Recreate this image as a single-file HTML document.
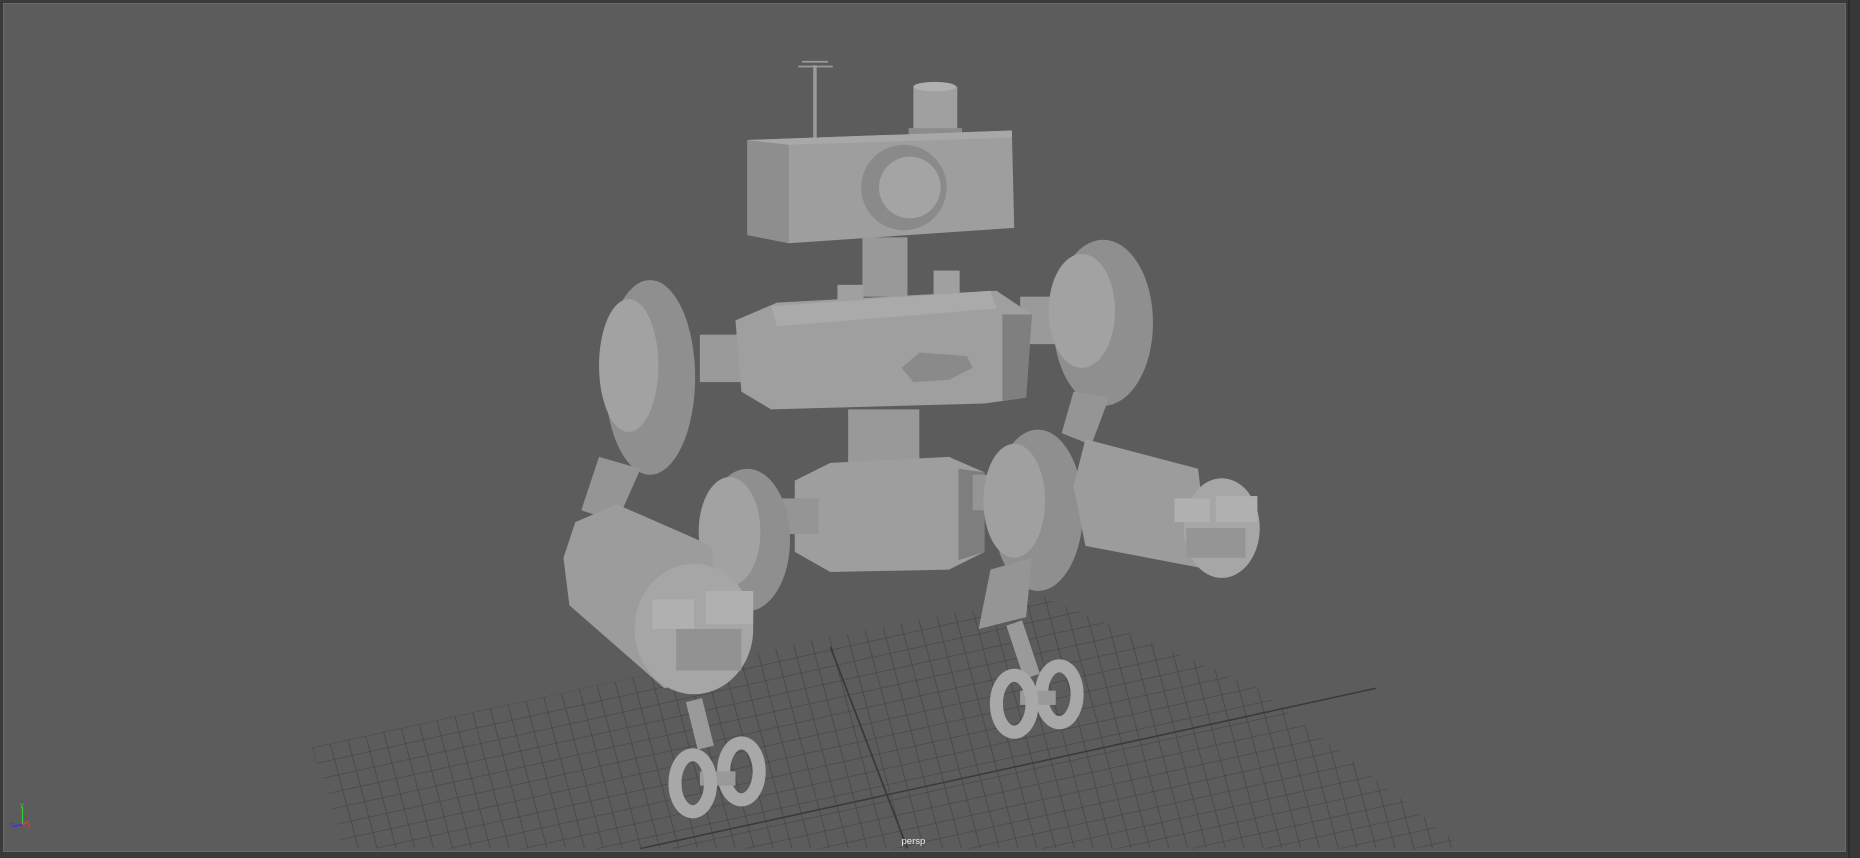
<!DOCTYPE html>
<html><head><style>
html,body{margin:0;padding:0;width:1860px;height:858px;overflow:hidden;background:#3a3a3a;font-family:"Liberation Sans",sans-serif}
#vp{position:absolute;left:3px;top:3px;width:1843px;height:849px;background:#5c5c5c;border:1px solid #6a6a6a;box-sizing:border-box}
#rp{position:absolute;left:1848px;top:0;width:12px;height:858px;background:#373737;border-left:2px solid #2c2c2c}
svg{position:absolute;left:0;top:0}
</style></head><body>
<div id="vp"></div>
<div id="rp"></div>
<svg width="1860" height="858" viewBox="0 0 1568 723" preserveAspectRatio="none">
<defs>
<pattern id="g" width="10" height="10" patternUnits="userSpaceOnUse" patternTransform="matrix(1.5,-0.33,0.35,1.3,263,630)">
<path d="M0 0H10M0 0V10" stroke="#454545" stroke-width="0.8" fill="none"/>
</pattern>
<clipPath id="fc"><polygon points="263,630 560,565 760,525 880,503 1060,580 1235,715 290,715"/></clipPath>
</defs>
<rect x="0" y="0" width="1568" height="723" fill="url(#g)" clip-path="url(#fc)"/>
<line x1="700" y1="545" x2="765" y2="715" stroke="#3a3a3a" stroke-width="1.5"/>
<line x1="540" y1="715" x2="1160" y2="580" stroke="#3a3a3a" stroke-width="1.3"/>
<g stroke="none">
<line x1="687" y1="55" x2="687" y2="122" stroke="#9a9a9a" stroke-width="3"/>
<line x1="673" y1="56" x2="702" y2="56" stroke="#9a9a9a" stroke-width="1.5"/>
<line x1="676" y1="52" x2="698" y2="52" stroke="#9a9a9a" stroke-width="1.5"/>
<rect x="770" y="73" width="37" height="38" fill="#a0a0a0"/>
<ellipse cx="788" cy="73" rx="18" ry="4" fill="#b0b0b0"/>
<rect x="766" y="108" width="45" height="8" fill="#8c8c8c"/>
<polygon points="630,118 853,110 855,192 665,205 630,198" fill="#9e9e9e"/>
<polygon points="630,118 665,122 665,205 630,198" fill="#8e8e8e"/>
<polygon points="630,118 853,110 853,116 665,122" fill="#a8a8a8"/>
<circle cx="762" cy="158" r="36" fill="#8a8a8a"/>
<circle cx="767" cy="158" r="26" fill="#a4a4a4"/>
<rect x="727" y="200" width="38" height="50" fill="#999"/>
<rect x="706" y="240" width="22" height="25" fill="#a0a0a0"/>
<rect x="787" y="228" width="22" height="25" fill="#a0a0a0"/>
<rect x="590" y="282" width="60" height="40" fill="#9a9a9a"/>
<rect x="860" y="250" width="60" height="40" fill="#9a9a9a"/>
<polygon points="620,270 655,255 840,245 870,265 865,335 830,340 650,345 625,330" fill="#9f9f9f"/>
<polygon points="650,258 835,245 840,260 655,275" fill="#aaa"/>
<polygon points="845,265 870,265 865,335 845,338" fill="#7f7f7f"/>
<polygon points="760,310 775,297 815,300 820,310 800,320 770,322" fill="#8a8a8a"/>
<ellipse cx="548" cy="318" rx="38" ry="82" fill="#8f8f8f"/>
<ellipse cx="530" cy="308" rx="25" ry="56" fill="#a2a2a2"/>
<ellipse cx="930" cy="272" rx="42" ry="70" fill="#8f8f8f"/>
<ellipse cx="912" cy="262" rx="28" ry="48" fill="#a2a2a2"/>
<rect x="715" y="345" width="60" height="60" fill="#999"/>
<polygon points="670,405 700,390 800,385 830,398 830,465 800,480 700,482 670,465" fill="#9e9e9e"/>
<polygon points="808,395 830,398 830,465 808,472" fill="#7e7e7e"/>
<rect x="650" y="420" width="40" height="30" fill="#959595"/>
<rect x="820" y="400" width="40" height="30" fill="#959595"/>
<ellipse cx="630" cy="455" rx="36" ry="60" fill="#8f8f8f"/>
<ellipse cx="615" cy="448" rx="26" ry="46" fill="#a2a2a2"/>
<ellipse cx="875" cy="430" rx="38" ry="68" fill="#8f8f8f"/>
<ellipse cx="855" cy="422" rx="26" ry="48" fill="#a0a0a0"/>
<polygon points="505,385 540,395 520,440 490,430" fill="#959595"/>
<polygon points="905,330 935,335 920,375 895,365" fill="#959595"/>
<polygon points="915,370 1010,395 1020,480 915,460 905,410" fill="#9c9c9c"/>
<ellipse cx="1030" cy="445" rx="32" ry="42" fill="#a6a6a6"/>
<rect x="990" y="420" width="30" height="20" fill="#b0b0b0"/>
<rect x="1025" y="418" width="35" height="22" fill="#b0b0b0"/>
<rect x="1000" y="445" width="50" height="25" fill="#959595"/>
<polygon points="485,440 520,425 600,460 610,570 560,580 480,510 475,470" fill="#9c9c9c"/>
<ellipse cx="585" cy="530" rx="50" ry="55" fill="#a6a6a6"/>
<rect x="550" y="505" width="35" height="25" fill="#b0b0b0"/>
<rect x="595" y="498" width="40" height="28" fill="#b0b0b0"/>
<rect x="570" y="530" width="55" height="35" fill="#929292"/>
<polygon points="835,480 870,470 865,520 825,530" fill="#959595"/>
<path d="M855 525 L870 570" stroke="#9a9a9a" stroke-width="14" fill="none"/>
<path d="M585 590 L595 630" stroke="#9a9a9a" stroke-width="14" fill="none"/>
<ellipse cx="893" cy="585" rx="15" ry="24" fill="none" stroke="#a8a8a8" stroke-width="11"/>
<rect x="860" y="582" width="30" height="12" fill="#999"/>
<ellipse cx="855" cy="593" rx="15" ry="24" fill="none" stroke="#a8a8a8" stroke-width="11"/>
<ellipse cx="625" cy="650" rx="15" ry="24" fill="none" stroke="#a8a8a8" stroke-width="11"/>
<rect x="590" y="650" width="30" height="12" fill="#999"/>
<ellipse cx="584" cy="660" rx="15" ry="24" fill="none" stroke="#a8a8a8" stroke-width="11"/>
</g>
<line x1="19" y1="695" x2="19" y2="680" stroke="#3c3" stroke-width="1"/>
<line x1="19" y1="695" x2="12" y2="696" stroke="#33f" stroke-width="1.5"/>
<line x1="19" y1="695" x2="24" y2="692" stroke="#e33" stroke-width="1.5"/>
<text x="17" y="680" font-size="6" fill="#3c3">y</text>
<text x="9" y="697" font-size="6" fill="#33f">z</text>
<text x="23" y="697" font-size="6" fill="#e33">x</text>
<text x="760" y="711" font-size="8" fill="#eee" font-family="Liberation Sans,sans-serif">persp</text>
</svg>
</body></html>
